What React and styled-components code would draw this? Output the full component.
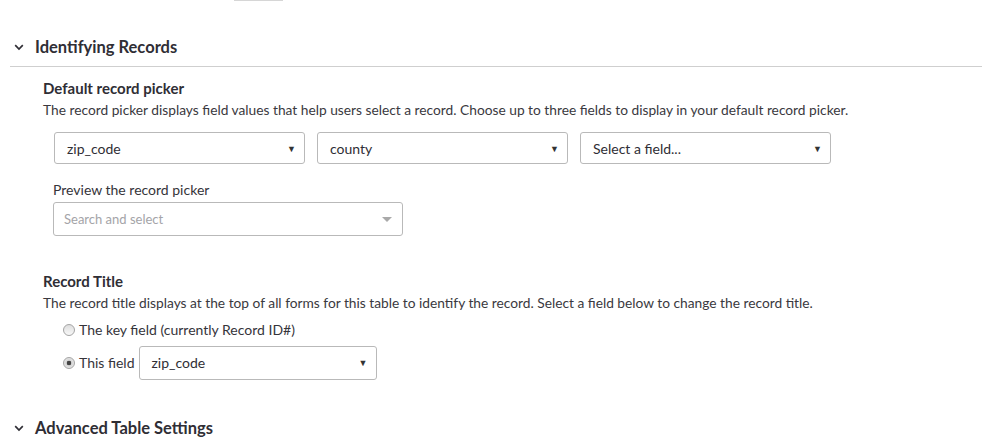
import React from 'react';
import styled, { createGlobalStyle } from 'styled-components';

const Global = createGlobalStyle`
  body {
    margin: 0;
    background: #fff;
    font-family: Lato, "Open Sans", sans-serif;
    color: #35343a;
  }
`;

const Page = styled.div`
  width: 982px;
  height: 437px;
  overflow: hidden;
`;

const TopStub = styled.div`
  margin-left: 234px;
  width: 49px;
  height: 1px;
  background: #d6d6d6;
`;

const SectionHead = styled.div`
  display: flex;
  align-items: center;
  gap: 11px;
  padding: 0 0 0 14px;
  height: 24px;
  margin-top: ${p => p.top}px;
  font-size: 16.5px;
  font-weight: 700;
  color: #2f2e35;
`;

const Divider = styled.div`
  margin: ${p => p.top}px 0 0 10px;
  height: 1px;
  background: #cfcfcf;
`;

const Body = styled.div`
  padding-left: 43px;
`;

const SubTitle = styled.div`
  font-size: 15px;
  font-weight: 700;
  color: #2f2e35;
  line-height: 18px;
  margin-top: ${p => p.top}px;
`;

const Desc = styled.div`
  font-size: 13.75px;
  line-height: 18px;
  margin-top: 4px;
  color: #3a3940;
`;

const SelectRow = styled.div`
  display: flex;
  gap: 12px;
  margin: 13px 0 0 11px;
`;

const Select = styled.div`
  box-sizing: border-box;
  width: ${p => p.w}px;
  height: ${p => p.h || 32}px;
  border: 1px solid #b9b9b9;
  border-radius: 3px;
  display: flex;
  align-items: center;
  justify-content: space-between;
  padding: 0 8px 0 12px;
  font-size: 14px;
  color: #2f2e35;
  background: #fff;
`;

const Caret = styled.span`
  font-size: 9px;
  color: #333;
`;

const Label = styled.div`
  font-size: 14px;
  line-height: 18px;
  margin: 17px 0 0 10px;
`;

const SearchBox = styled(Select)`
  margin: 3px 0 0 10px;
  color: #a4a4a8;
  font-size: 13px;
  padding: 0 10px 0 10px;
`;

const GreyCaret = styled.span`
  width: 0;
  height: 0;
  border-left: 5px solid transparent;
  border-right: 5px solid transparent;
  border-top: 5px solid #a9a9a9;
`;

const RadioRow = styled.label`
  display: flex;
  align-items: center;
  gap: 4px;
  margin: ${p => p.top}px 0 0 20px;
  font-size: 14px;
  line-height: 18px;
`;

const Radio = styled.span`
  box-sizing: border-box;
  width: 12px;
  height: 12px;
  border-radius: 50%;
  border: 1px solid #a4a4a4;
  background: ${p => p.checked
    ? 'radial-gradient(circle, #444 0 2px, #d4d4d4 2.6px, #f2f2f2 100%)'
    : 'linear-gradient(#dedede, #f8f8f8)'};
`;

const InlineSelect = styled(Select)`
  height: 34px;
`;

const Chevron = () => (
  <svg width="10" height="10" viewBox="0 0 10 10">
    <path d="M1.2 3.2 L5 7 L8.8 3.2" fill="none" stroke="#2f2e35" strokeWidth="1.7" />
  </svg>
);

export default function App() {
  return (
    <Page>
      <Global />
      <TopStub />
      <SectionHead top={34}>
        <Chevron />
        Identifying Records
      </SectionHead>
      <Divider top={7} />
      <Body>
        <SubTitle top={12}>Default record picker</SubTitle>
        <Desc>
          The record picker displays field values that help users select a record. Choose up to three fields to display in your default record picker.
        </Desc>
        <SelectRow>
          <Select w={251}>zip_code<Caret>▼</Caret></Select>
          <Select w={251}>county<Caret>▼</Caret></Select>
          <Select w={251}>Select a field...<Caret>▼</Caret></Select>
        </SelectRow>
        <Label>Preview the record picker</Label>
        <SearchBox w={350} h={34}>
          Search and select
          <GreyCaret />
        </SearchBox>
        <SubTitle top={36}>Record Title</SubTitle>
        <Desc>
          The record title displays at the top of all forms for this table to identify the record. Select a field below to change the record title.
        </Desc>
        <RadioRow top={9}>
          <Radio />
          The key field (currently Record ID#)
        </RadioRow>
        <RadioRow top={7}>
          <Radio checked />
          This field
          <InlineSelect w={238}>zip_code<Caret>▼</Caret></InlineSelect>
        </RadioRow>
      </Body>
      <SectionHead top={36}>
        <Chevron />
        Advanced Table Settings
      </SectionHead>
    </Page>
  );
}
